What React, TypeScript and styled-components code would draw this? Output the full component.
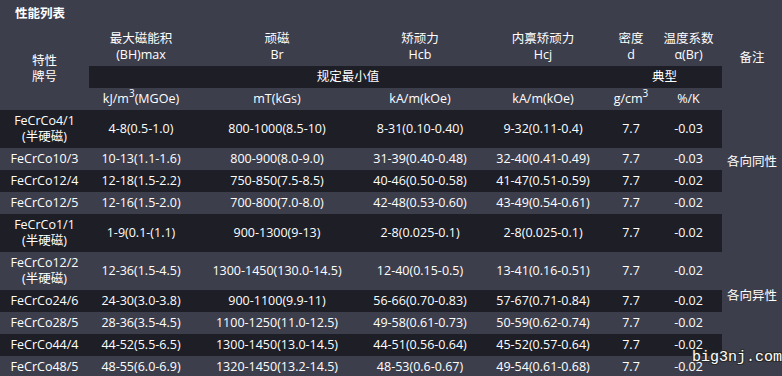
import React from "react";
import styled, { createGlobalStyle } from "styled-components";

const GlobalStyle = createGlobalStyle`
  html, body {
    margin: 0;
    padding: 0;
    background: #3d3e4c;
  }
  body {
    font-family: "Open Sans", "Noto Sans CJK SC", sans-serif;
    color: #ffffff;
  }
`;

const Page = styled.div`
  position: relative;
  width: 782px;
  height: 376px;
  overflow: hidden;
  background: #3d3e4c;
`;

const Title = styled.div`
  padding: 5px 0 7px 15px;
  height: 16px;
  line-height: 16px;
  font-size: 12.5px;
  font-weight: 700;
  font-family: "Noto Sans CJK SC", sans-serif;
`;

const Table = styled.table`
  width: 782px;
  table-layout: fixed;
  border-collapse: collapse;
  border-spacing: 0;
  font-size: 12.5px;
  line-height: 16px;
`;

const Th = styled.th`
  padding: 3px 0;
  font-weight: 400;
  text-align: center;
  vertical-align: middle;
  white-space: nowrap;
`;

const BandCell = styled.th`
  padding: 3px 0;
  font-weight: 400;
  text-align: center;
  vertical-align: middle;
  background: #1d1e26;
`;

const Td = styled.td<{ $dark?: boolean }>`
  padding: 3px 0;
  text-align: center;
  vertical-align: middle;
  white-space: nowrap;
  background: ${(p) => (p.$dark ? "#1d1e26" : "transparent")};
`;

const RemarkCell = styled.td`
  padding: 3px 0;
  text-align: center;
  vertical-align: middle;
  background: transparent;
`;

const Sup = styled.sup`
  font-size: 10px;
  line-height: 0;
  vertical-align: 0;
  position: relative;
  top: -6px;
`;

const Watermark = styled.div`
  position: absolute;
  left: 692px;
  top: 349px;
  font-family: "Liberation Mono", monospace;
  font-size: 15px;
  line-height: 18px;
  color: #ffffff;
  text-shadow: -1px -1px 0 #2a2a2a, 1px -1px 0 #2a2a2a, -1px 1px 0 #2a2a2a,
    1px 1px 0 #2a2a2a;
`;

type Row = {
  grade: string;
  semi?: boolean;
  bh: string;
  br: string;
  hcb: string;
  hcj: string;
  d: string;
  a: string;
};

const rows: Row[] = [
  { grade: "FeCrCo4/1", semi: true, bh: "4-8(0.5-1.0)", br: "800-1000(8.5-10)", hcb: "8-31(0.10-0.40)", hcj: "9-32(0.11-0.4)", d: "7.7", a: "-0.03" },
  { grade: "FeCrCo10/3", bh: "10-13(1.1-1.6)", br: "800-900(8.0-9.0)", hcb: "31-39(0.40-0.48)", hcj: "32-40(0.41-0.49)", d: "7.7", a: "-0.03" },
  { grade: "FeCrCo12/4", bh: "12-18(1.5-2.2)", br: "750-850(7.5-8.5)", hcb: "40-46(0.50-0.58)", hcj: "41-47(0.51-0.59)", d: "7.7", a: "-0.02" },
  { grade: "FeCrCo12/5", bh: "12-16(1.5-2.0)", br: "700-800(7.0-8.0)", hcb: "42-48(0.53-0.60)", hcj: "43-49(0.54-0.61)", d: "7.7", a: "-0.02" },
  { grade: "FeCrCo1/1", semi: true, bh: "1-9(0.1-(1.1)", br: "900-1300(9-13)", hcb: "2-8(0.025-0.1)", hcj: "2-8(0.025-0.1)", d: "7.7", a: "-0.02" },
  { grade: "FeCrCo12/2", semi: true, bh: "12-36(1.5-4.5)", br: "1300-1450(130.0-14.5)", hcb: "12-40(0.15-0.5)", hcj: "13-41(0.16-0.51)", d: "7.7", a: "-0.02" },
  { grade: "FeCrCo24/6", bh: "24-30(3.0-3.8)", br: "900-1100(9.9-11)", hcb: "56-66(0.70-0.83)", hcj: "57-67(0.71-0.84)", d: "7.7", a: "-0.02" },
  { grade: "FeCrCo28/5", bh: "28-36(3.5-4.5)", br: "1100-1250(11.0-12.5)", hcb: "49-58(0.61-0.73)", hcj: "50-59(0.62-0.74)", d: "7.7", a: "-0.02" },
  { grade: "FeCrCo44/4", bh: "44-52(5.5-6.5)", br: "1300-1450(13.0-14.5)", hcb: "44-51(0.56-0.64)", hcj: "45-52(0.57-0.64)", d: "7.7", a: "-0.02" },
  { grade: "FeCrCo48/5", bh: "48-55(6.0-6.9)", br: "1320-1450(13.2-14.5)", hcb: "48-53(0.6-0.67)", hcj: "49-54(0.61-0.68)", d: "7.7", a: "-0.02" },
];

const widths = [89, 104, 168, 118, 128, 48, 67, 60];

export default function App() {
  return (
    <>
      <GlobalStyle />
      <Page>
        <Title>性能列表</Title>
        <Table>
          <colgroup>
            {widths.map((w, i) => (
              <col key={i} style={{ width: w }} />
            ))}
          </colgroup>
          <thead>
            <tr>
              <Th rowSpan={3}>
                特性
                <br />
                牌号
              </Th>
              <Th>
                最大磁能积
                <br />
                (BH)max
              </Th>
              <Th>
                顽磁
                <br />
                Br
              </Th>
              <Th>
                矫顽力
                <br />
                Hcb
              </Th>
              <Th>
                内禀矫顽力
                <br />
                Hcj
              </Th>
              <Th>
                密度
                <br />d
              </Th>
              <Th>
                温度系数
                <br />
                α(Br)
              </Th>
              <Th rowSpan={2}>备注</Th>
            </tr>
            <tr>
              <BandCell colSpan={4}>规定最小值</BandCell>
              <BandCell colSpan={2}>典型</BandCell>
            </tr>
            <tr>
              <Th>
                kJ/m<Sup>3</Sup>(MGOe)
              </Th>
              <Th>mT(kGs)</Th>
              <Th>kA/m(kOe)</Th>
              <Th>kA/m(kOe)</Th>
              <Th>
                g/cm<Sup>3</Sup>
              </Th>
              <Th>%/K</Th>
              <Th />
            </tr>
          </thead>
          <tbody>
            {rows.map((r, i) => {
              const dark = i % 2 === 0;
              return (
                <tr key={r.grade}>
                  <Td $dark={dark}>
                    {r.grade}
                    {r.semi && (
                      <>
                        <br />
                        (半硬磁)
                      </>
                    )}
                  </Td>
                  <Td $dark={dark}>{r.bh}</Td>
                  <Td $dark={dark}>{r.br}</Td>
                  <Td $dark={dark}>{r.hcb}</Td>
                  <Td $dark={dark}>{r.hcj}</Td>
                  <Td $dark={dark}>{r.d}</Td>
                  <Td $dark={dark}>{r.a}</Td>
                  {i === 0 && <RemarkCell rowSpan={4}>各向同性</RemarkCell>}
                  {i === 4 && <RemarkCell rowSpan={6}>各向异性</RemarkCell>}
                </tr>
              );
            })}
          </tbody>
        </Table>
        <Watermark>big3nj.com</Watermark>
      </Page>
    </>
  );
}
